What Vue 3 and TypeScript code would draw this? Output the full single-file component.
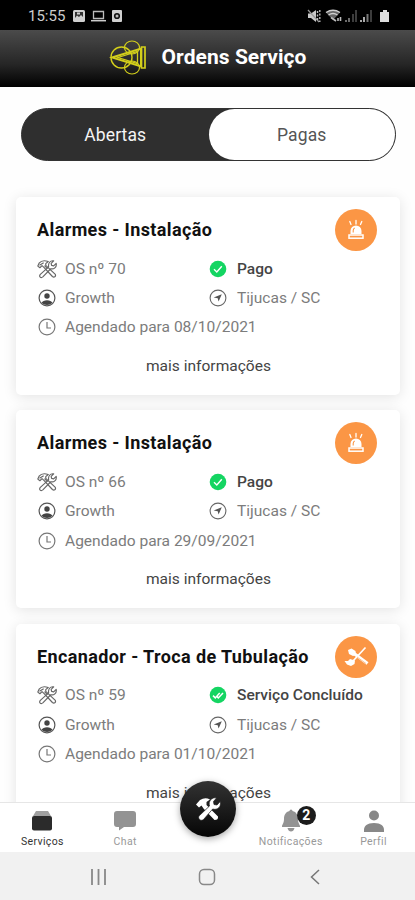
<script setup lang="ts">
interface Order {
  title: string
  number: number
  status: string
  done: boolean
  date: string
  kind: 'alarm' | 'plumbing'
}

const orders: Order[] = [
  { title: 'Alarmes - Instalação', number: 70, status: 'Pago', done: false, date: '08/10/2021', kind: 'alarm' },
  { title: 'Alarmes - Instalação', number: 66, status: 'Pago', done: false, date: '29/09/2021', kind: 'alarm' },
  { title: 'Encanador - Troca de Tubulação', number: 59, status: 'Serviço Concluído', done: true, date: '01/10/2021', kind: 'plumbing' },
]
</script>

<template>
  <div class="screen">
    <div class="status">
      <span class="time">15:55</span>
      <svg class="status-left" width="52" height="14" viewBox="0 0 52 14">
        <rect x="1" y="1" width="12" height="12" rx="1.500" fill="#d0d0d0" />
        <path d="M3 3h8v5l-2-2-2 2-2-1.500L3 9z" fill="#333" />
        <path d="M5 3.500h3v2H5z" fill="#d0d0d0" />
        <path d="M21.500 2.500h10v7h-10z" fill="none" stroke="#bbb" stroke-width="1.300" />
        <path d="M19 11.700h15" stroke="#ccc" stroke-width="1.500" />
        <rect x="40" y="1" width="10" height="12" rx="1" fill="#d0d0d0" />
        <circle cx="45" cy="7" r="2.300" fill="#bbb" stroke="#111" stroke-width="1.600" />
      </svg>
      <svg class="status-right" width="84" height="14" viewBox="0 0 84 14">
        <path d="M1 4.500h3l5-3.500v12L4 9H1z" fill="#c8c8c8" />
        <path d="M1 1l11 12" stroke="#999" stroke-width="1.200" />
        <path d="M10.500 2v10M12.800 1v12" stroke="#bbb" stroke-width="1.400" stroke-dasharray="2 1.500" />
        <path d="M19 3.500q7-4.500 14 0L26 11z" fill="#666" />
        <path d="M19 3.500q7-4.500 14 0M21.500 6q4.500-3 9 0" fill="none" stroke="#d0d0d0" stroke-width="1.400" />
        <path d="M24 8.500l5 3.500m2-3v3m2.500-4v4" stroke="#bbb" stroke-width="1.600" />
        <path d="M39 11v2M42 9v4" stroke="#777" stroke-width="1.800" />
        <path d="M46 5v8M49 1v12" stroke="#3c3c3c" stroke-width="2" />
        <path d="M54 11v2M57 8v5" stroke="#aaa" stroke-width="2" />
        <path d="M60.500 5v8" stroke="#777" stroke-width="2" />
        <path d="M64 1v12" stroke="#3c3c3c" stroke-width="2" />
        <path d="M73 3h3V1h4v2h2v10h-9z" fill="#dedede" />
      </svg>
    </div>

    <header class="header">
      <svg class="logo" width="37" height="37" viewBox="0 0 37 37" fill="none" stroke="#d3cf1b">
        <ellipse cx="23" cy="8.500" rx="7.500" ry="6.500" stroke-width="1.200" />
        <ellipse cx="12.500" cy="18.500" rx="10.500" ry="10.500" stroke-width="1.400" />
        <ellipse cx="23" cy="28.500" rx="7.500" ry="6.500" stroke-width="1.200" />
        <path d="M3 18.500L32 9.500v18z" stroke-width="2" />
        <path d="M9 18.500L28.500 12.500v12z" stroke-width="1.300" />
        <path d="M32.500 8h3.500v21h-3.500z" stroke-width="1.700" />
      </svg>
      <h1>Ordens Serviço</h1>
    </header>

    <main class="content">
      <div class="tabs">
        <button class="tab">Abertas</button>
        <button class="tab selected">Pagas</button>
      </div>

      <article v-for="order in orders" :key="order.number" class="card">
        <div class="card-head">
          <h2>{{ order.title }}</h2>
          <span class="kind">
            <svg v-if="order.kind === 'alarm'" width="20" height="22" viewBox="0 0 20 22">
              <path d="M5 5.500L3.800 2.500M10 5V1.500M14.500 5.500l1.300-3" stroke="#fff" stroke-width="1.300" stroke-linecap="round" />
              <path d="M4.500 15v-3a5.500 5.500 0 0 1 11 0v3z" fill="#fff" />
              <path d="M7.200 13.500v-2a3 3 0 0 1 1.500-2.500" fill="none" stroke="#fb9645" stroke-width="1.100" />
              <rect x="3" y="16" width="14" height="3.200" fill="none" stroke="#fff" stroke-width="1.500" />
            </svg>
            <svg v-else width="28" height="24" viewBox="0 0 28 24">
              <path d="M23.500 2.500L11 16" stroke="#fff" stroke-width="1.700" />
              <path d="M8 14l5 1.500-.5 3.500-3.500 2-4-1.500-2.500-3.500 3.500 0z" fill="#fff" />
              <path d="M6 5l3.500-1.500 4 2.500.5 4-3 1-4-2z" fill="#fff" />
              <path d="M12 8.500l13.500 10" stroke="#fff" stroke-width="3.400" />
              <path d="M15 12l9 6.500" stroke="#fb9645" stroke-width=".6" />
            </svg>
          </span>
        </div>

        <div class="details">
          <div class="detail">
            <svg width="20" height="20" viewBox="0 0 24 24" fill="none" stroke="#666" stroke-width="1.400" stroke-linejoin="round">
              <path d="M1 8.500l1.500-3.500C5 2 9 1.500 13.500 3L10.500 5.500v2.200L22 18.500c1 2.500-1.500 4-3.500 2.500L8 9.800 6 8 3.500 10.500z" />
              <path d="M20 2.200l-3 3 .5 2.500 2.500.5 3-3c1 5-3 7.500-6.500 6.500L7 21.500c-2.500 2-5-.5-3-3L14 9.500C13 5 16 1.500 20 2.200z" />
              <path d="M3 7.500l5-3M9 8l3.500 3.500" />
            </svg>
            <span>OS nº {{ order.number }}</span>
          </div>
          <div class="detail strong">
            <svg width="18" height="18" viewBox="0 0 18 18">
              <circle cx="9" cy="9" r="8.300" fill="#14d562" />
              <path v-if="!order.done" d="M5 9.300l2.800 2.600 5-5.700" fill="none" stroke="#fff" stroke-width="1.400" />
              <path v-else d="M4 9.600l2.300 2.300 4.400-4.800M7.800 10.400l1.500 1.500 4.700-4.800" fill="none" stroke="#fff" stroke-width="1.500" />
            </svg>
            <span>{{ order.status }}</span>
          </div>
          <div class="detail">
            <svg width="20" height="20" viewBox="0 0 20 20">
              <circle cx="10" cy="10" r="7.900" fill="none" stroke="#555" stroke-width="1.200" />
              <circle cx="10" cy="8" r="2.700" fill="#444" />
              <path d="M4.500 14.700q1.500-2.500 5.500-2.500t5.500 2.500a7.500 7.500 0 0 1-11 0z" fill="#444" />
            </svg>
            <span>Growth</span>
          </div>
          <div class="detail place">
            <svg width="18" height="18" viewBox="0 0 18 18">
              <circle cx="9" cy="9" r="7.900" fill="none" stroke="#666" stroke-width="1.100" />
              <path d="M12.800 5.200l-3.200 7.300-.9-3.200-4-.8z" fill="#555" />
            </svg>
            <span>Tijucas / SC</span>
          </div>
          <div class="detail wide">
            <svg width="20" height="20" viewBox="0 0 20 20" fill="none" stroke="#777" stroke-width="1.200">
              <circle cx="10" cy="10" r="7.900" />
              <path d="M10 5v6h4" />
            </svg>
            <span>Agendado para {{ order.date }}</span>
          </div>
        </div>
        <div class="more">mais informações</div>
      </article>
    </main>

    <nav class="nav">
      <div class="nav-item active">
        <svg width="24" height="24" viewBox="0 0 24 24">
          <path d="M6 2h12l3 5H3z" fill="#a0a0a0" />
          <rect x="2" y="7" width="20" height="14.500" rx="2" fill="#2b2b2b" />
        </svg>
        <span>Serviços</span>
      </div>
      <div class="nav-item">
        <svg width="24" height="24" viewBox="0 0 24 24">
          <path d="M4 2h16q3 0 3 3v10q0 3-3 3h-9l-5 3.500V18H4q-3 0-3-3V5q0-3 3-3z" fill="#939393" />
        </svg>
        <span>Chat</span>
      </div>
      <div class="nav-item center">
        <div class="fab">
          <svg width="28" height="26" viewBox="0 0 28 26">
            <path d="M2 8.500L6 4q5-3 10-.5L12.500 6v3L24 20.500q.5 3.500-3.500 3.500L9.500 12.500 7.500 9.500 5 11.500z" fill="#fff" />
            <path d="M22.500 2l-3 3.500.5 3 3 .5 3.200-3.500c1.500 5.500-3 9-7.500 7.500L9.500 23.500c-3 2.500-6.500-1.500-4-4L15.500 10C14 5 18 .8 22.500 2z" fill="#fff" stroke="#1c1c1c" stroke-width=".7" />
          </svg>
        </div>
      </div>
      <div class="nav-item">
        <div class="bell">
          <svg width="24" height="24" viewBox="0 0 24 24">
            <path d="M10.500 2a1.500 1.500 0 0 1 3 0c4 1 5.500 4 5.500 8 0 4 1.500 5 2 7v1H3v-1c.5-2 2-3 2-7 0-4 1.500-7 5.500-8z" fill="#939393" />
            <path d="M8.500 19h7q-1 3.500-3.500 3.500T8.500 19z" fill="#939393" />
          </svg>
          <span class="badge">2</span>
        </div>
        <span>Notificações</span>
      </div>
      <div class="nav-item">
        <svg width="24" height="24" viewBox="0 0 24 24">
          <circle cx="12" cy="6.500" r="5" fill="#888" />
          <path d="M2 23v-2c0-4 3-7 10-7s10 3 10 7v2z" fill="#888" />
        </svg>
        <span>Perfil</span>
      </div>
    </nav>

    <div class="system">
      <svg width="20" height="20" viewBox="0 0 20 20"><path d="M4 2v16M10.500 2v16M17 2v16" stroke="#888" stroke-width="1.800" /></svg>
      <svg width="20" height="20" viewBox="0 0 20 20"><rect x="2.500" y="2.500" width="15" height="15" rx="4.500" fill="none" stroke="#888" stroke-width="1.500" /></svg>
      <svg width="20" height="20" viewBox="0 0 20 20"><path d="M14 3L6.500 10l7.500 7" fill="none" stroke="#777" stroke-width="1.500" /></svg>
    </div>
  </div>
</template>

<style>
body {
  margin: 0;
  overflow: hidden;
}
</style>

<style scoped>
.screen {
  display: flex;
  flex-direction: column;
  width: 415px;
  height: 900px;
  overflow: hidden;
  background: #fefefe;
  font-family: Roboto, "Liberation Sans", sans-serif;
}
svg {
  display: block;
  flex: none;
}
.status {
  flex: none;
  display: flex;
  align-items: center;
  box-sizing: border-box;
  height: 30px;
  padding: 2px 24px 0 28px;
  background: #000;
}
.time {
  width: 44px;
  color: #ccc;
  font-size: 15px;
}
.status-right {
  margin-left: auto;
}
.header {
  flex: none;
  display: flex;
  align-items: center;
  justify-content: center;
  gap: 16px;
  height: 57px;
  background: linear-gradient(#4b4b4b, #262626 60%, #000);
}
.logo {
  margin-top: -3px;
}
h1 {
  margin: -4px 0 0;
  color: #fff;
  font-size: 21px;
  font-weight: 700;
  letter-spacing: 0.06px;
}
.content {
  flex: 1;
  min-height: 0;
  overflow: hidden;
  padding: 21px 16px 0;
}
.tabs {
  display: flex;
  box-sizing: border-box;
  width: 375px;
  height: 53px;
  margin: 0 0 36px 5px;
  border: 1px solid #333;
  border-radius: 27px;
  background: #2f2f2f;
}
.tab {
  flex: 1;
  padding: 0;
  border: 0;
  border-radius: 26px;
  background: none;
  color: #f4f4f4;
  font: 400 17.500px Roboto, "Liberation Sans", sans-serif;
  letter-spacing: 0.1px;
}
.tab.selected {
  background: #fff;
  color: #555;
}
.card {
  box-sizing: border-box;
  width: 384px;
  height: 198px;
  margin-bottom: 15.400px;
  padding: 12px 23px 0 21px;
  border-radius: 5px;
  background: #fff;
  box-shadow: 0 2px 14px rgba(0, 0, 0, 0.11);
}
.card-head {
  display: flex;
  align-items: center;
  justify-content: space-between;
  height: 42px;
}
h2 {
  margin: -1px 0 0;
  color: #111;
  font-size: 18px;
  font-weight: 700;
  letter-spacing: 0.39px;
  white-space: nowrap;
}
.kind {
  display: flex;
  align-items: center;
  justify-content: center;
  width: 42px;
  height: 42px;
  border-radius: 50%;
  background: #fb9645;
}
.details {
  display: grid;
  grid-template-columns: 172px 1fr;
  grid-auto-rows: 29.300px;
  margin-top: 3px;
}
.detail {
  display: flex;
  align-items: center;
  gap: 8px;
  color: #7c7c7c;
  font-size: 15.550px;
  white-space: nowrap;
}
.strong {
  gap: 10px;
  color: #444;
  font-weight: 500;
}
.place {
  gap: 10px;
}
.wide {
  grid-column: 1 / 3;
}
.more {
  margin-top: 14px;
  padding-left: 3px;
  color: #444;
  font-size: 15.550px;
  line-height: 20px;
  text-align: center;
}
.nav {
  position: relative;
  flex: none;
  display: grid;
  grid-template-columns: repeat(5, 1fr);
  box-sizing: border-box;
  height: 50px;
  padding-left: 1px;
  border-top: 1px solid #e6e6e6;
  background: #fff;
}
.nav-item {
  display: flex;
  flex-direction: column;
  align-items: center;
  gap: 3px;
  padding-top: 6px;
  color: #999;
  font-size: 10.500px;
  line-height: 12px;
  letter-spacing: 0.38px;
}
.nav-item.active {
  color: #333;
}
.nav-item.center {
  padding: 0;
}
.fab {
  display: flex;
  align-items: center;
  justify-content: center;
  flex: none;
  width: 56px;
  height: 56px;
  margin-top: -22px;
  border-radius: 50%;
  background: linear-gradient(#333, #050505);
  box-shadow: 0 2px 7px rgba(0, 0, 0, 0.35);
}
.bell {
  position: relative;
}
.badge {
  position: absolute;
  top: -3px;
  left: 18px;
  width: 19px;
  height: 19px;
  border-radius: 50%;
  background: #1c1c1c;
  color: #fff;
  font-size: 14px;
  font-weight: 700;
  letter-spacing: 0;
  line-height: 19px;
  text-align: center;
}
.system {
  flex: none;
  display: flex;
  align-items: center;
  justify-content: space-between;
  box-sizing: border-box;
  height: 48px;
  padding: 2px 90px 0 88px;
  background: #f1f1f1;
}
</style>
